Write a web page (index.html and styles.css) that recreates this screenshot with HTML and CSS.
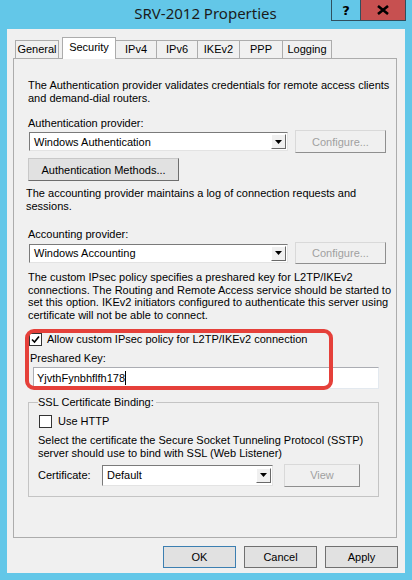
FILE: index.html
```html
<!DOCTYPE html>
<html>
<head>
<meta charset="utf-8">
<link rel="stylesheet" href="styles.css">
</head>
<body>
<div class="window">
  <div class="titlebar">
    <div class="title">SRV-2012 Properties</div>
    <div class="caption-btns">
      <div class="cap help">?</div>
      <div class="cap close"><svg width="12" height="10" viewBox="0 0 12 10"><path d="M1 1 L11 9 M11 1 L1 9" stroke="#000" stroke-width="2.6"/></svg></div>
    </div>
  </div>
  <div class="client">
    <div class="tabs">
      <div class="tab t-general">General</div>
      <div class="tab selected t-security">Security</div>
      <div class="tab t-ipv4">IPv4</div>
      <div class="tab t-ipv6">IPv6</div>
      <div class="tab t-ikev2">IKEv2</div>
      <div class="tab t-ppp">PPP</div>
      <div class="tab t-logging">Logging</div>
    </div>
    <div class="panel">
      <p class="para p1">The Authentication provider validates credentials for remote access clients and demand-dial routers.</p>
      <div class="label l-auth">Authentication provider:</div>
      <div class="row r-auth">
        <div class="select s-wide"><span class="sel-text">Windows Authentication</span><span class="arrow"><svg width="7" height="4" viewBox="0 0 7 4"><path d="M0 0 H7 L3.5 4 Z" fill="#000"/></svg></span></div>
        <div class="btn disabled b-config">Configure...</div>
      </div>
      <div class="btn b-methods">Authentication Methods...</div>
      <p class="para p2">The accounting provider maintains a log of connection requests and sessions.</p>
      <div class="label l-acct">Accounting provider:</div>
      <div class="row r-acct">
        <div class="select s-wide"><span class="sel-text">Windows Accounting</span><span class="arrow"><svg width="7" height="4" viewBox="0 0 7 4"><path d="M0 0 H7 L3.5 4 Z" fill="#000"/></svg></span></div>
        <div class="btn disabled b-config">Configure...</div>
      </div>
      <p class="para p3">The custom IPsec policy specifies a preshared key for L2TP/IKEv2 connections. The Routing and Remote Access service should be started to set this option. IKEv2 initiators configured to authenticate this server using certificate will not be able to connect.</p>
      <div class="check-row c-ipsec">
        <span class="checkbox"><svg width="9" height="9" viewBox="0 0 9 9"><path d="M1 4.5 L3.5 7 L8 1.5" stroke="#000" stroke-width="1.6" fill="none"/></svg></span>
        <span class="check-label">Allow custom IPsec policy for L2TP/IKEv2 connection</span>
      </div>
      <div class="label l-key">Preshared Key:</div>
      <div class="input"><span>YjvthFynbhflfh178</span><span class="caret"></span></div>
      <div class="group">
        <div class="legend">SSL Certificate Binding:</div>
        <div class="check-row c-http">
          <span class="checkbox"></span>
          <span class="check-label">Use HTTP</span>
        </div>
        <p class="para p4">Select the certificate the Secure Socket Tunneling Protocol (SSTP) server should use to bind with SSL (Web Listener)</p>
        <div class="row r-cert">
          <div class="cert-label">Certificate:</div>
          <div class="select s-cert"><span class="sel-text">Default</span><span class="arrow"><svg width="7" height="4" viewBox="0 0 7 4"><path d="M0 0 H7 L3.5 4 Z" fill="#000"/></svg></span></div>
          <div class="btn disabled b-view">View</div>
        </div>
      </div>
      <div class="highlight"></div>
    </div>
    <div class="footer">
      <div class="btn fbtn default">OK</div>
      <div class="btn fbtn">Cancel</div>
      <div class="btn fbtn">Apply</div>
    </div>
  </div>
</div>
</body>
</html>
```

FILE: styles.css
```css
* { box-sizing: border-box; }
html, body { margin: 0; padding: 0; }
body {
  width: 412px;
  height: 580px;
  background: #63c7e8;
  font-family: "Liberation Sans", Arial, sans-serif;
  font-size: 11px;
  color: #000;
  overflow: hidden;
}
.window { width: 412px; height: 580px; }
.titlebar {
  height: 29px;
  display: flex;
  align-items: flex-start;
}
.title {
  flex: 1;
  text-align: center;
  padding-left: 80px;
  padding-top: 3px;
  font-family: "Noto Sans", "Open Sans", sans-serif;
  font-size: 15px;
  line-height: 21px;
  color: #1b1b1b;
}
.caption-btns {
  display: flex;
  margin-right: 6px;
}
.cap {
  height: 21px;
  display: flex;
  align-items: center;
  justify-content: center;
  border: 1px solid #2f4f5e;
  border-top: none;
}
.help {
  width: 29px;
  background: #63c7e8;
  font-weight: bold;
  font-family: "DejaVu Sans", sans-serif;
  font-size: 13px;
  border-right: none;
}
.close {
  width: 46px;
  background: #c75050;
}
.client {
  margin: 0 7px;
  height: 544px;
  background: #f0f0f0;
  padding-top: 8px;
}
.tabs {
  display: flex;
  align-items: flex-end;
  height: 21px;
  margin-left: 8px;
}
.tab {
  height: 18px;
  border: 1px solid #acacac;
  border-bottom: none;
  background: #f0f0f0;
  text-align: center;
  line-height: 17px;
  margin-left: -1px;
  position: relative;
}
.t-general { width: 44px; margin-left: 0; }
.t-security { width: 54px; margin-left: 3px; }
.t-ipv4 { width: 42px; }
.t-ipv6 { width: 42px; }
.t-ikev2 { width: 43px; }
.t-ppp { width: 44px; }
.t-logging { width: 50px; }
.tab.selected {
  height: 22px;
  margin-bottom: -1px;
  background: #ffffff;
  z-index: 2;
  line-height: 18px;
}
.panel {
  position: relative;
  margin-left: 6px;
  width: 384px;
  height: 480px;
  border: 1px solid #acacac;
  background: #f0f0f0;
  padding: 20px 0 0 14px;
}
.para { margin: 0; line-height: 13px; }
.p1 { width: 366px; }
.label { line-height: 13px; }
.l-auth { margin-top: 12px; }
.row { display: flex; align-items: center; }
.r-auth { margin-top: 0; height: 23px; }
.select {
  height: 19px;
  background: #fff;
  border: 1px solid;
  border-color: #7a7a7a #e3e3e3 #e3e3e3 #7a7a7a;
  display: flex;
  align-items: center;
  justify-content: space-between;
  padding: 0 1px 0 4px;
}
.s-wide { width: 259px; margin-left: 1px; }
.arrow {
  width: 15px;
  height: 15px;
  background: #f0f0f0;
  border: 1px solid;
  border-color: #ffffff #696969 #696969 #ffffff;
  display: flex;
  align-items: center;
  justify-content: center;
}
.btn {
  height: 23px;
  border: 1px solid;
  border-color: #c8c8c8 #6e6e6e #6e6e6e #c8c8c8;
  background: #e1e1e1;
  display: flex;
  align-items: center;
  justify-content: center;
}
.btn.disabled {
  color: #a0a0a0;
  background: #f0f0f0;
  border-color: #d9d9d9 #8f8f8f #8f8f8f #d9d9d9;
}
.b-config { width: 91px; margin-left: 7px; }
.b-methods { width: 151px; margin-top: 5px; }
.p2 { margin-top: 6px; margin-left: -2px; width: 366px; }
.l-acct { margin-top: 15px; }
.r-acct { margin-top: 1px; height: 22px; }
.r-acct .b-config { height: 22px; }
.p3 { margin-top: 7px; width: 366px; line-height: 12.7px; }
.check-row { display: flex; align-items: center; height: 13px; }
.c-ipsec { margin-top: 11px; margin-left: 1px; }
.checkbox {
  width: 13px;
  height: 13px;
  border: 1px solid #333;
  background: #fff;
  display: flex;
  align-items: center;
  justify-content: center;
}
.check-label { margin-left: 5px; }
.l-key { margin-top: 6px; margin-left: 2px; }
.input {
  margin-top: 2px;
  margin-left: 5px;
  width: 346px;
  height: 22px;
  background: #fff;
  border: 1px solid;
  border-color: #abadb3 #e3e9ef #e3e9ef #abadb3;
  display: flex;
  align-items: center;
  padding-left: 3px;
}
.caret { width: 1px; height: 14px; background: #000; }
.group {
  margin-top: 13px;
  width: 351px;
  height: 95px;
  border: 1px solid #c4c4c4;
  padding: 0 0 0 9px;
}
.legend {
  display: block;
  width: max-content;
  margin-top: -7px;
  background: #f0f0f0;
  padding: 0 2px 0 0;
  line-height: 13px;
}
.c-http { margin-top: 6px; margin-left: 1px; }
.c-http .check-label { margin-left: 6px; }
.p4 { margin-top: 6px; line-height: 13.5px; width: 340px; }
.r-cert { margin-top: 3px; height: 23px; }
.cert-label { width: 64px; }
.s-cert { width: 171px; height: 21px; }
.b-view { width: 76px; margin-left: 11px; }
.highlight {
  position: absolute;
  left: 11px;
  top: 270px;
  width: 308px;
  height: 61px;
  border: 4px solid #e5403a;
  border-radius: 9px;
}
.footer {
  display: flex;
  gap: 8px;
  padding-left: 156px;
  margin-top: 8px;
}
.fbtn {
  width: 73px;
  height: 22px;
  border: 1px solid #707070;
  background: #e1e1e1;
}
.fbtn.default { border-color: #3c7fb1; }
```
